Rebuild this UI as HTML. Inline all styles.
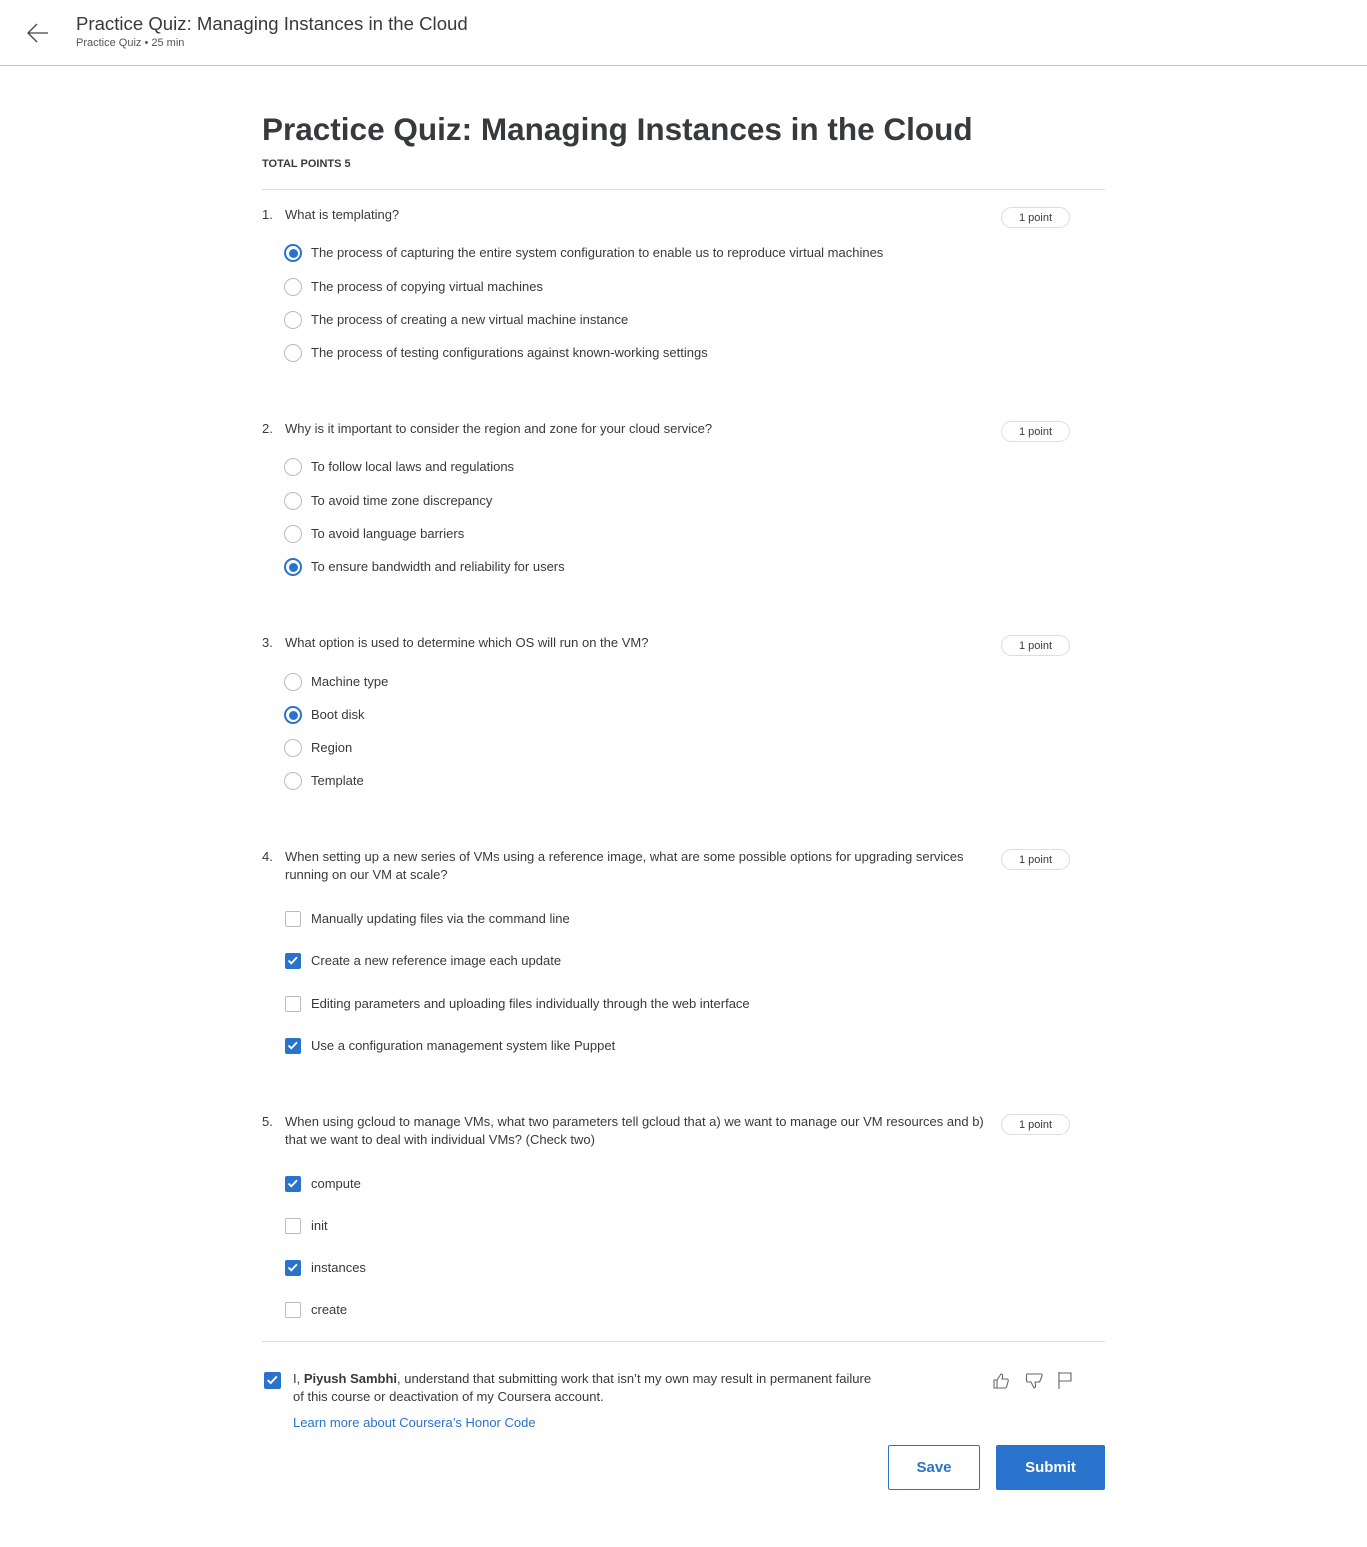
<!DOCTYPE html>
<html><head><meta charset="utf-8">
<style>
*{margin:0;padding:0;box-sizing:border-box}
body{width:1367px;height:1547px;background:#fff;font-family:"Liberation Sans",sans-serif;color:#373a3c;position:relative;overflow:hidden}
.a{position:absolute;white-space:nowrap}
.t{font-size:13px;line-height:18px;color:#373a3c;margin-top:1px}
.rad{position:absolute;width:18px;height:18px;border:1.5px solid #bbb;border-radius:50%}
.rad.on{border:2px solid #2a73cc}
.rad.on::after{content:"";position:absolute;left:2.5px;top:2.5px;width:9px;height:9px;border-radius:50%;background:#2a73cc}
.cb{position:absolute;width:16px;height:16px;border:1.5px solid #bbb;border-radius:2px}
.cb.on{background:#2a73cc;border-color:#2a73cc}
.pt{position:absolute;left:1001px;width:69px;height:21px;border:1px solid #ddd;border-radius:11px;font-size:11px;line-height:20px;text-align:center;color:#373a3c}
.hr{position:absolute;left:262px;width:843px;height:1px;background:#ddd}
</style></head><body>
<div class="a" style="left:0;top:65px;width:1367px;height:1px;background:#c4c4c4"></div>
<svg class="a" style="left:24px;top:20px" width="26" height="26" viewBox="0 0 26 26"><path d="M24 13H4M13 4L4 13L13 22" stroke="#444" stroke-width="1.3" fill="none"/></svg>
<div class="a" style="left:76px;top:12px;font-size:18.6px;line-height:24px;color:#373a3c">Practice Quiz: Managing Instances in the Cloud</div>
<div class="a" style="left:76px;top:36px;font-size:11px;line-height:14px;color:#555">Practice Quiz • 25 min</div>

<div class="a" style="left:262px;top:107px;font-size:31.5px;line-height:44px;font-weight:bold;color:#373a3c">Practice Quiz: Managing Instances in the Cloud</div>
<div class="a" style="left:262px;top:157px;font-size:11px;line-height:14px;font-weight:bold">TOTAL POINTS 5</div>
<div class="hr" style="top:189px"></div>

<!-- Q1 -->
<div class="a t" style="left:262px;top:205px">1.</div>
<div class="a t" style="left:285px;top:205px">What is templating?</div>
<div class="pt" style="top:207px">1 point</div>
<div class="rad on" style="left:284px;top:244px"></div><div class="a t" style="left:311px;top:243px">The process of capturing the entire system configuration to enable us to reproduce virtual machines</div>
<div class="rad" style="left:284px;top:278px"></div><div class="a t" style="left:311px;top:277px">The process of copying virtual machines</div>
<div class="rad" style="left:284px;top:311px"></div><div class="a t" style="left:311px;top:310px">The process of creating a new virtual machine instance</div>
<div class="rad" style="left:284px;top:344px"></div><div class="a t" style="left:311px;top:343px">The process of testing configurations against known-working settings</div>

<!-- Q2 -->
<div class="a t" style="left:262px;top:419px">2.</div>
<div class="a t" style="left:285px;top:419px">Why is it important to consider the region and zone for your cloud service?</div>
<div class="pt" style="top:421px">1 point</div>
<div class="rad" style="left:284px;top:458px"></div><div class="a t" style="left:311px;top:457px">To follow local laws and regulations</div>
<div class="rad" style="left:284px;top:492px"></div><div class="a t" style="left:311px;top:491px">To avoid time zone discrepancy</div>
<div class="rad" style="left:284px;top:525px"></div><div class="a t" style="left:311px;top:524px">To avoid language barriers</div>
<div class="rad on" style="left:284px;top:558px"></div><div class="a t" style="left:311px;top:557px">To ensure bandwidth and reliability for users</div>

<!-- Q3 -->
<div class="a t" style="left:262px;top:633px">3.</div>
<div class="a t" style="left:285px;top:633px">What option is used to determine which OS will run on the VM?</div>
<div class="pt" style="top:635px">1 point</div>
<div class="rad" style="left:284px;top:673px"></div><div class="a t" style="left:311px;top:672px">Machine type</div>
<div class="rad on" style="left:284px;top:706px"></div><div class="a t" style="left:311px;top:705px">Boot disk</div>
<div class="rad" style="left:284px;top:739px"></div><div class="a t" style="left:311px;top:738px">Region</div>
<div class="rad" style="left:284px;top:772px"></div><div class="a t" style="left:311px;top:771px">Template</div>

<!-- Q4 -->
<div class="a t" style="left:262px;top:847px">4.</div>
<div class="a t" style="left:285px;top:847px">When setting up a new series of VMs using a reference image, what are some possible options for upgrading services</div>
<div class="a t" style="left:285px;top:865px">running on our VM at scale?</div>
<div class="pt" style="top:849px">1 point</div>
<div class="cb" style="left:285px;top:911px"></div><div class="a t" style="left:311px;top:909px">Manually updating files via the command line</div>
<div class="cb on" style="left:285px;top:953px"><svg width="13" height="13" viewBox="0 0 13 13" style="position:absolute;left:0;top:0"><path d="M2.5 6.5L5.3 9.3L11 3.2" stroke="#fff" stroke-width="1.8" fill="none"/></svg></div><div class="a t" style="left:311px;top:951px">Create a new reference image each update</div>
<div class="cb" style="left:285px;top:996px"></div><div class="a t" style="left:311px;top:994px">Editing parameters and uploading files individually through the web interface</div>
<div class="cb on" style="left:285px;top:1038px"><svg width="13" height="13" viewBox="0 0 13 13" style="position:absolute;left:0;top:0"><path d="M2.5 6.5L5.3 9.3L11 3.2" stroke="#fff" stroke-width="1.8" fill="none"/></svg></div><div class="a t" style="left:311px;top:1036px">Use a configuration management system like Puppet</div>

<!-- Q5 -->
<div class="a t" style="left:262px;top:1112px">5.</div>
<div class="a t" style="left:285px;top:1112px">When using gcloud to manage VMs, what two parameters tell gcloud that a) we want to manage our VM resources and b)</div>
<div class="a t" style="left:285px;top:1130px">that we want to deal with individual VMs? (Check two)</div>
<div class="pt" style="top:1114px">1 point</div>
<div class="cb on" style="left:285px;top:1176px"><svg width="13" height="13" viewBox="0 0 13 13" style="position:absolute;left:0;top:0"><path d="M2.5 6.5L5.3 9.3L11 3.2" stroke="#fff" stroke-width="1.8" fill="none"/></svg></div><div class="a t" style="left:311px;top:1174px">compute</div>
<div class="cb" style="left:285px;top:1218px"></div><div class="a t" style="left:311px;top:1216px">init</div>
<div class="cb on" style="left:285px;top:1260px"><svg width="13" height="13" viewBox="0 0 13 13" style="position:absolute;left:0;top:0"><path d="M2.5 6.5L5.3 9.3L11 3.2" stroke="#fff" stroke-width="1.8" fill="none"/></svg></div><div class="a t" style="left:311px;top:1258px">instances</div>
<div class="cb" style="left:285px;top:1302px"></div><div class="a t" style="left:311px;top:1300px">create</div>

<div class="hr" style="top:1341px"></div>

<!-- honor -->
<div class="cb on" style="left:264px;top:1372px;width:17px;height:17px"><svg width="14" height="14" viewBox="0 0 13 13" style="position:absolute;left:0;top:0"><path d="M2.5 6.5L5.3 9.3L11 3.2" stroke="#fff" stroke-width="1.8" fill="none"/></svg></div>
<div class="a t" style="left:293px;top:1369px">I, <b>Piyush Sambhi</b>, understand that submitting work that isn’t my own may result in permanent failure</div>
<div class="a t" style="left:293px;top:1387px">of this course or deactivation of my Coursera account.</div>
<div class="a t" style="left:293px;top:1413px;color:#2a73cc">Learn more about Coursera’s Honor Code</div>

<svg class="a" style="left:991px;top:1371px" width="20" height="20" viewBox="0 0 20 20"><path d="M3 9h3v8H3zM6 9l4-6c1.5 0 2 1 1.5 3L11 8h5c1 0 1.5 1 1.2 2l-1.5 5.5c-.3 1-1 1.5-2 1.5H6" stroke="#666" stroke-width="1.1" fill="none"/></svg>
<svg class="a" style="left:1024px;top:1371px" width="20" height="20" viewBox="0 0 20 20"><path d="M3 3h14c1 0 1.5 1 1 2l-2 5c-.4 1-1 1-2 1h-3l.5 3c.3 2-.5 3-1.5 3L7 11H4c-1 0-1.5-.5-1.5-1.5V4z" stroke="#666" stroke-width="1.1" fill="none"/></svg>
<svg class="a" style="left:1057px;top:1371px" width="16" height="20" viewBox="0 0 16 20"><path d="M2 1v17M2 2h12v8H2" stroke="#666" stroke-width="1.1" fill="none"/></svg>

<div class="a" style="left:888px;top:1445px;width:92px;height:45px;border:1px solid #2a73cc;border-radius:2px;color:#2a73cc;font-size:15px;font-weight:bold;line-height:43px;text-align:center">Save</div>
<div class="a" style="left:996px;top:1445px;width:109px;height:45px;background:#2a73cc;border-radius:2px;color:#fff;font-size:15px;font-weight:bold;line-height:45px;text-align:center">Submit</div>
</body></html>
